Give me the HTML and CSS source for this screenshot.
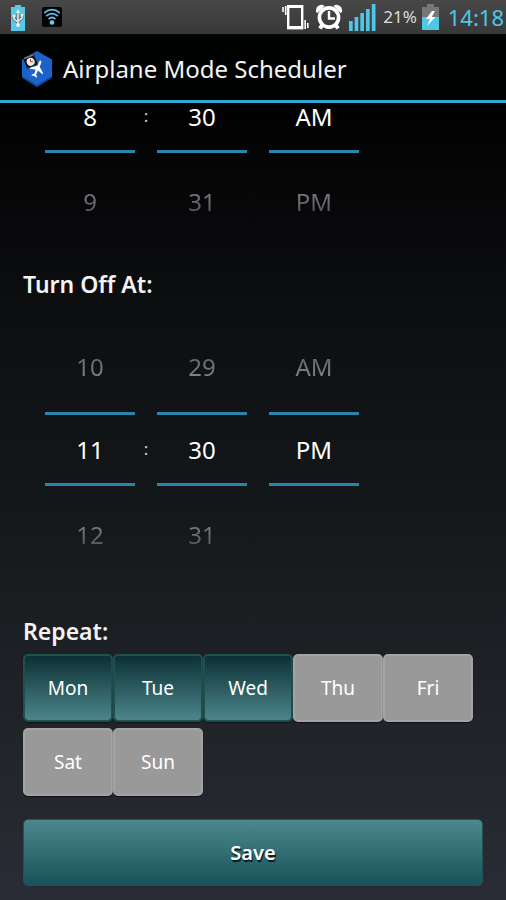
FILE: index.html
```html
<!DOCTYPE html>
<html lang="en">
<head>
<meta charset="utf-8">
<meta name="viewport" content="width=device-width, initial-scale=1">
<title>Airplane Mode Scheduler</title>
<link rel="stylesheet" href="styles.css">
</head>
<body>
<div class="status-bar">
  <svg class="usb" width="16" height="26" viewBox="0 0 16 26" aria-hidden="true">
    <path fill="#58c8e8" d="M5 0h6v2h4v24H1V2h4z"/>
    <g fill="none" stroke="#56656b" stroke-width="3"><path d="M8 6v15M4 11v3l4 3M12 10v3l-4 3"/></g>
    <g fill="none" stroke="#eee" stroke-width="1.5"><path d="M8 6v15M4 11v3l4 3M12 10v3l-4 3"/></g>
    <path fill="#eee" d="M8 4l2.400 4H5.600zM10.700 9h2.600v2.600h-2.600z"/>
    <circle cx="4" cy="11" r="1.500" fill="#eee"/><circle cx="8" cy="20" r="2" fill="#eee"/>
  </svg>
  <svg class="wifi" width="20" height="20" viewBox="0 0 20 20" aria-hidden="true">
    <rect width="20" height="20" rx="2.500" fill="#050505"/>
    <g fill="none" stroke="#6bb9e6" stroke-width="1.700"><path d="M2.200 5.800q7.800-6.500 15.600 0M4.300 9q5.700-4.800 11.400 0M6.600 12q3.400-3 6.800 0"/></g>
    <circle cx="10" cy="15.500" r="2.300" fill="#78c8ee"/>
  </svg>
  <div class="status-right">
    <svg width="27" height="26" viewBox="0 0 27 26" aria-hidden="true">
      <rect x="6.200" y="2.200" width="14" height="22" fill="none" stroke="#fff" stroke-width="2.400"/>
      <path d="M6 22h15v3H6zM6 1h15v3H6z" fill="#fff"/>
      <path d="M1 3v5M3.700 2v9M23.200 16v9M25.800 19v5" stroke="#fff" stroke-width="1.600"/>
    </svg>
    <svg width="26" height="26" viewBox="0 0 26 26" aria-hidden="true">
      <g fill="none" stroke="#fff"><circle cx="13" cy="13.500" r="9.600" stroke-width="3.600"/>
      <path stroke-width="2.400" d="M13 7v7.500h6"/><path stroke-width="4" d="M6.500 20.500L4 24.500M19.500 20.500l2.500 4"/></g>
      <path fill="#fff" d="M0 8q-.5-5 3-6.500 3-1.500 5.500.5L1.500 9zM26 8q.5-5-3-6.500-3-1.500-5.500.5l7 7z"/>
    </svg>
    <svg width="27" height="27" viewBox="0 0 27 27" aria-hidden="true">
      <path fill="#50c6e5" d="M0 17h3.700v10H0zM5.600 13h3.700v14H5.600zM11.300 9H15v18h-3.700zM17 5h3.700v22H17zM22.800 0h3.700v27h-3.700z"/>
    </svg>
    <span class="percent">21%</span>
    <svg class="battery" width="17" height="26" viewBox="0 0 17 26" aria-hidden="true">
      <path fill="#777" d="M5 0h7v3h5v11H0V3h5z"/><path fill="#50c6e5" d="M0 13h17v13H0z"/>
      <path fill="#fff" d="M10 7L4 15h4l-3 7 8.500-9H9.700L13 7z"/>
    </svg>
    <time class="clock">14:18</time>
  </div>
</div>
<header class="app-bar">
  <svg width="30" height="36" viewBox="0 0 30 36" aria-hidden="true">
    <path fill="#1b63cb" d="M15 0l15 8.500v18L15 36 0 26.500v-18z"/>
    <path fill="#124596" d="M0 25l15 9 15-9v1.500L15 36 0 26.500z"/>
    <g transform="translate(15.500 17.500) rotate(23) scale(.85)">
      <path fill="#fff" d="M0-10q1.400 0 1.500 3v4L8 2.200v1.900L1.500 1.800l-.4 5 2.200 2.400V10.500L0 9.500l-3.300 1V9.200l2.200-2.400-.4-5L-8 4.100V2.200L-1.500-3v-4Q-1.400-10 0-10z"/>
    </g>
    <g transform="rotate(-22 8 10)">
      <path fill="#131313" d="M2.500 5h11.500v11H2.500z"/><path d="M3.500 5.500h10" stroke="#777" stroke-width="1.400"/>
      <circle cx="8.300" cy="11" r="4" fill="#eee"/>
    </g>
    <path d="M8.500 8v2.700H11" fill="none" stroke="#d22" stroke-width="1"/>
  </svg>
  <h1>Airplane Mode Scheduler</h1>
</header>
<main>
  <section class="picker" aria-label="Turn on at">
    <div class="wheel">
      <input aria-label="Hour on" value="8">
      <button type="button" class="next">9</button>
    </div>
    <span class="colon">:</span>
    <div class="wheel">
      <input aria-label="Minute on" value="30">
      <button type="button" class="next">31</button>
    </div>
    <div class="wheel period">
      <input aria-label="AM or PM on" value="AM">
      <button type="button" class="next">PM</button>
    </div>
  </section>
  <h2>Turn Off At:</h2>
  <section class="picker full" aria-label="Turn off at">
    <div class="wheel">
      <button type="button" class="prev">10</button>
      <input aria-label="Hour off" value="11">
      <button type="button" class="next">12</button>
    </div>
    <span class="colon">:</span>
    <div class="wheel">
      <button type="button" class="prev">29</button>
      <input aria-label="Minute off" value="30">
      <button type="button" class="next">31</button>
    </div>
    <div class="wheel period">
      <button type="button" class="prev">AM</button>
      <input aria-label="AM or PM off" value="PM">
    </div>
  </section>
  <h2 class="repeat">Repeat:</h2>
  <div class="days">
    <button type="button" aria-pressed="true">Mon</button>
    <button type="button" aria-pressed="true">Tue</button>
    <button type="button" aria-pressed="true">Wed</button>
    <button type="button" aria-pressed="false">Thu</button>
    <button type="button" aria-pressed="false">Fri</button>
    <button type="button" aria-pressed="false">Sat</button>
    <button type="button" aria-pressed="false">Sun</button>
  </div>
  <button type="button" class="save">Save</button>
</main>
</body>
</html>
```

FILE: styles.css
```css
* {
  box-sizing: border-box;
}

body {
  margin: 0;
  height: 100vh;
  display: flex;
  flex-direction: column;
  overflow: hidden;
  background: linear-gradient(#000 0, #000 10%, #0c0d0f 32%, #14171a 55%, #202428 80%, #292c35 100%);
  color: #f3f3f3;
  font-family: "Noto Sans", "Open Sans", sans-serif;
}

button,
input {
  margin: 0;
  padding: 0;
  border: 0;
  background: none;
  color: inherit;
  font: inherit;
  text-align: center;
}

svg {
  display: block;
  flex: none;
}

.status-bar {
  flex: none;
  height: 34px;
  padding: 0 2px 0 10px;
  display: flex;
  align-items: center;
  background: linear-gradient(#484848, #383838);
}

.usb {
  margin-top: 2px;
}

.wifi {
  margin-left: 16px;
}

.status-right {
  margin-left: auto;
  display: flex;
  align-items: center;
  gap: 7px;
}

.percent {
  font-size: 17px;
  line-height: 34px;
  color: #ddd;
}

.battery {
  margin-left: -2px;
}

.clock {
  margin-left: 2px;
  font-size: 22px;
  line-height: 34px;
  color: #50c6e5;
}

.app-bar {
  flex: none;
  height: 69px;
  padding: 4px 22px 0;
  display: flex;
  align-items: center;
  gap: 11px;
  background: #010202;
  border-bottom: 3px solid #31a5d3;
}

h1 {
  margin: 0;
  font-size: 24px;
  font-weight: 400;
  line-height: 36px;
}

main {
  flex: 1;
  min-height: 0;
  overflow: hidden;
  padding: 0 23px 14px;
  display: flex;
  flex-direction: column;
  justify-content: flex-end;
}

main > * {
  flex: none;
}

.picker {
  padding: 0 22px;
  display: flex;
  align-items: flex-start;
  font-size: 24px;
}

.wheel {
  width: 90px;
  display: flex;
  flex-direction: column;
}

.wheel input {
  width: 100%;
  height: 74px;
  border: solid #2985ab;
  border-width: 3px 0;
  color: #fff;
}

.prev {
  height: 92px;
  color: #6e6f71;
  background: linear-gradient(#5c5d5f 35%, #85868a 65%) text;
  -webkit-text-fill-color: transparent;
}

.next {
  height: 96px;
  color: #6e6f71;
  background: linear-gradient(#85868a 35%, #505154 65%) text;
  -webkit-text-fill-color: transparent;
}

.colon {
  width: 22px;
  font-size: 17px;
  line-height: 74px;
  text-align: center;
  color: #ccc;
}

.full .colon {
  margin-top: 92px;
}

.period {
  margin-left: 22px;
}

h2 {
  margin: 17px 0 18px;
  font-size: 23px;
  font-weight: 600;
  line-height: 36px;
}

.repeat {
  margin: 31px 0 5px;
}

.days {
  display: flex;
  flex-wrap: wrap;
  row-gap: 6px;
}

.days button {
  width: 90px;
  height: 68px;
  border: 2px solid #a3a3a3;
  border-radius: 5px;
  background: #999;
  box-shadow: 0 1px 1px #10131b;
  color: #fff;
  font-size: 19px;
}

.days button[aria-pressed="true"] {
  border-color: #1f504d;
  background: linear-gradient(#0c3034, #4b868b) padding-box;
}

.save {
  height: 67px;
  margin-top: 23px;
  border: 1px solid #245451;
  border-radius: 5px;
  background: linear-gradient(#4c888e, #175358);
  color: #fff;
  font-size: 20px;
  font-weight: 600;
  text-shadow: 1px 2px 1px #051a1c;
}
```
